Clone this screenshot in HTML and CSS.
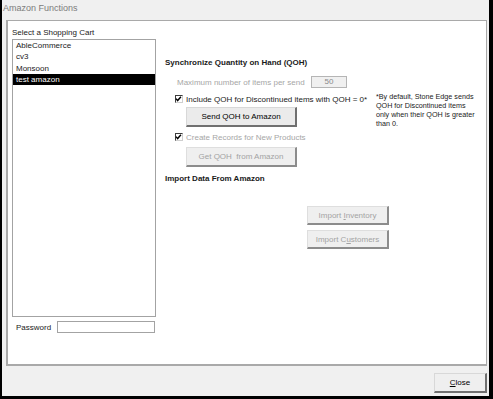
FILE: index.html
```html
<!DOCTYPE html>
<html>
<head>
    <title>Amazon Functions</title>
    <link rel="stylesheet" href="styles.css">
</head>
<body>
    <div class="window">
        <div class="titlebar">Amazon Functions</div>

        <div class="panel">
            <div class="carts">
                <div class="carts-label">Select a Shopping Cart</div>
                <ul class="cart-list">
                    <li>AbleCommerce</li>
                    <li>cv3</li>
                    <li>Monsoon</li>
                    <li class="selected">test amazon</li>
                </ul>
                <div class="password-row">
                    <label for="password">Password</label>
                    <input type="password" id="password" class="password-input">
                </div>
            </div>

            <div class="functions">
                <h2 class="section-title sync-title">Synchronize Quantity on Hand (QOH)</h2>

                <div class="max-row">
                    <span class="max-label">Maximum number of items per send</span>
                    <span class="max-box">50</span>
                </div>

                <div class="sync-body">
                    <div class="sync-controls">
                        <div class="check-row">
                            <span class="checkbox">
                                <svg width="8" height="8" viewBox="0 0 8 8"><polyline points="1.2,3.6 3,5.8 6.8,1.4" fill="none" stroke="#000" stroke-width="1.6"/></svg>
                            </span>
                            <span>Include QOH for Discontinued items with QOH = 0*</span>
                        </div>
                        <button class="btn btn-sync">Send QOH to Amazon</button>

                        <div class="check-row disabled">
                            <span class="checkbox">
                                <svg width="8" height="8" viewBox="0 0 8 8"><polyline points="1.2,3.6 3,5.8 6.8,1.4" fill="none" stroke="#000" stroke-width="1.6"/></svg>
                            </span>
                            <span>Create Records for New Products</span>
                        </div>
                        <button class="btn btn-sync" disabled>Get QOH&nbsp; from Amazon</button>
                    </div>

                    <p class="note">*By default, Stone Edge sends<br>QOH for Discontinued items<br>only when their QOH is greater<br>than 0.</p>
                </div>

                <h2 class="section-title import-title">Import Data From Amazon</h2>

                <div class="import-buttons">
                    <button class="btn btn-import" disabled>Import <u>I</u>nventory</button>
                    <button class="btn btn-import" disabled>Import C<u>u</u>stomers</button>
                </div>
            </div>
        </div>

        <div class="footer">
            <button class="btn btn-close"><u>C</u>lose</button>
        </div>
    </div>
</body>
</html>
```

FILE: styles.css
```css
* {
    margin: 0;
    padding: 0;
    box-sizing: border-box;
}

body {
    font-family: "Liberation Sans", Arial, sans-serif;
    font-size: 8px;
    color: #1a1a1a;
    background-color: #000;
}

.window {
    width: 493px;
    height: 399px;
    background-color: #f0f0f0;
    border-left: 2px solid #000;
    border-right: 4px solid #000;
    border-bottom: 3px solid #000;
    display: flex;
    flex-direction: column;
}

.titlebar {
    height: 20px;
    padding: 3px 0 0 1px;
    font-size: 9px;
    line-height: 11px;
    color: #7c7c7c;
}

/* Main white panel */
.panel {
    height: 346px;
    margin: 0 2px 0 4px;
    background-color: #fff;
    border: 1px solid #a9a9a9;
    border-left: 2px solid #a9a9a9;
    border-bottom: 2px solid #a9a9a9;
    padding: 6px 0 0 4px;
    display: flex;
    gap: 9px;
}

.carts {
    width: 144px;
}

.carts-label {
    line-height: 11px;
    margin-bottom: 1px;
}

.cart-list {
    list-style: none;
    height: 278px;
    border: 1px solid #a3a3a3;
}

.cart-list li {
    height: 11.3px;
    line-height: 11.3px;
    padding-left: 3px;
}

.cart-list li.selected {
    background-color: #000;
    color: #fff;
}

.password-row {
    display: flex;
    align-items: center;
    margin-top: 4px;
}

.password-row label {
    width: 45px;
    padding-left: 4px;
}

.password-input {
    width: 98px;
    height: 12px;
    border: 1px solid #a3a3a3;
    outline: none;
}

/* Right side */
.functions {
    flex: 1;
}

.section-title {
    font-size: 8px;
    font-weight: bold;
    line-height: 11px;
}

.sync-title {
    margin-top: 30px;
}

.max-row {
    display: flex;
    align-items: center;
    height: 12px;
    margin-top: 8px;
    padding-left: 12px;
    color: #a6a6a6;
}

.max-label {
    width: 134px;
}

.max-box {
    width: 36px;
    height: 12px;
    line-height: 10px;
    text-align: center;
    color: #8a8a8a;
    background-color: #f0f0f0;
    border: 1px solid #b5b5b5;
}

.sync-body {
    display: flex;
    margin-top: 5px;
}

.sync-controls {
    width: 211px;
    padding-left: 10px;
}

.check-row {
    display: flex;
    align-items: center;
    gap: 3px;
    height: 12px;
}

.check-row.disabled {
    color: #a6a6a6;
    margin-top: 4px;
}

.checkbox {
    display: flex;
    width: 8px;
    height: 8px;
    background-color: #fff;
    border-top: 1px solid #3c3c3c;
    border-left: 1px solid #3c3c3c;
    border-right: 1px solid #cfcfcf;
    border-bottom: 1px solid #cfcfcf;
}

.checkbox svg {
    margin: -1px 0 0 -1px;
}

.btn {
    font-family: "Liberation Sans", Arial, sans-serif;
    font-size: 8px;
    color: #000;
    background-color: #ebebeb;
    border-style: solid;
    border-width: 1px 2px 2px 1px;
    border-color: #d8d8d8 #707070 #707070 #d8d8d8;
    cursor: pointer;
}

.btn:disabled {
    color: #a3a3a3;
    background-color: #efefef;
    border-color: #dedede #8c8c8c #8c8c8c #dedede;
    cursor: default;
}

.btn u {
    text-underline-offset: 1px;
}

.btn-sync {
    display: block;
    width: 111px;
    height: 20px;
    margin: 2px 0 0 11px;
}

.btn-sync:disabled {
    margin-top: 4px;
}

.note {
    width: 110px;
    margin-top: -1px;
    font-size: 7.2px;
    line-height: 9px;
    color: #1a1a1a;
}

.import-title {
    margin-top: 6px;
}

.import-buttons {
    display: flex;
    flex-direction: column;
    gap: 5px;
    margin: 22px 0 0 142px;
}

.btn-import {
    width: 82px;
    height: 19px;
}

.footer {
    display: flex;
    justify-content: flex-end;
    padding: 7px 2px 0 0;
}

.btn-close {
    width: 53px;
    height: 20px;
    background-color: #efefef;
}
```
